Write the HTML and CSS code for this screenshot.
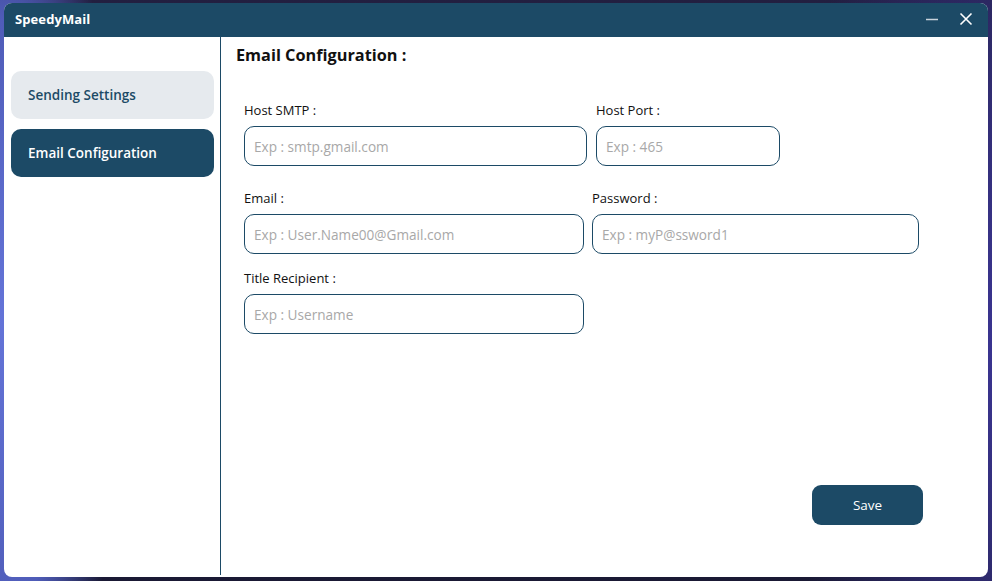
FILE: index.html
```html
<!DOCTYPE html>
<html lang="en">
<head>
<meta charset="utf-8">
<title>SpeedyMail</title>
<link rel="stylesheet" href="styles.css">
</head>
<body>
<div class="window">
  <header class="titlebar">
    <span class="app-name">SpeedyMail</span>
    <div class="controls">
      <button class="ctrl" aria-label="Minimize">
        <svg width="14" height="14" viewBox="0 0 14 14"><path d="M1 7.5h12" stroke="#c9d3dc" stroke-width="1.6"/></svg>
      </button>
      <button class="ctrl" aria-label="Close">
        <svg width="14" height="14" viewBox="0 0 14 14"><path d="M1.5 1.5l11 11M12.5 1.5l-11 11" stroke="#ffffff" stroke-width="1.6"/></svg>
      </button>
    </div>
  </header>
  <div class="body">
    <nav class="sidebar">
      <a class="nav-item">Sending Settings</a>
      <a class="nav-item active">Email Configuration</a>
    </nav>
    <main class="content">
      <h1 class="heading">Email Configuration :</h1>
      <div class="row row-first">
        <label class="field f-smtp"><span class="label">Host SMTP :</span><input class="input" placeholder="Exp : smtp.gmail.com"></label>
        <label class="field f-port"><span class="label">Host Port :</span><input class="input" placeholder="Exp : 465"></label>
      </div>
      <div class="row row-second">
        <label class="field f-email"><span class="label">Email :</span><input class="input" placeholder="Exp : User.Name00@Gmail.com"></label>
        <label class="field f-pass"><span class="label">Password :</span><input class="input" placeholder="Exp : myP@ssword1"></label>
      </div>
      <div class="row">
        <label class="field f-email"><span class="label">Title Recipient :</span><input class="input" placeholder="Exp : Username"></label>
      </div>
      <div class="actions">
        <button class="save">Save</button>
      </div>
    </main>
  </div>
</div>
</body>
</html>
```
FILE: styles.css
```css
* { box-sizing: border-box; }
html, body { margin: 0; height: 100%; }
body {
  width: 992px;
  height: 581px;
  overflow: hidden;
  padding: 3px 4px 4px 4px;
  font-family: "Open Sans", "Noto Sans", sans-serif;
  background:
    radial-gradient(ellipse 120px 500px at 0% 55%, #6474d8 0%, #4f5cb8 60%, rgba(40,40,100,0) 100%),
    radial-gradient(ellipse 200px 600px at 100% 60%, #3a3490 0%, rgba(40,36,110,0) 100%),
    linear-gradient(180deg, #221f40 0%, #2b2a5c 50%, #1a1934 100%);
}
.window {
  width: 984px;
  height: 574px;
  background: #ffffff;
  border-radius: 8px;
  overflow: hidden;
  display: flex;
  flex-direction: column;
}
.titlebar {
  height: 34px;
  flex: none;
  background: #1c4a66;
  display: flex;
  align-items: center;
  justify-content: space-between;
  padding: 0 15px 3px 11px;
}
.app-name {
  color: #ffffff;
  font-weight: 700;
  font-size: 13px;
  letter-spacing: 0.1px;
}
.controls { display: flex; gap: 20px; align-items: center; }
.ctrl {
  background: none;
  border: 0;
  padding: 0;
  width: 14px;
  height: 14px;
  display: block;
}
.ctrl svg { display: block; }
.body { flex: 1; display: flex; min-height: 0; }
.sidebar {
  width: 217px;
  flex: none;
  border-right: 1px solid #1c4a66;
  padding: 34px 6px 0 7px;
  display: flex;
  flex-direction: column;
  gap: 10px;
  margin-bottom: 2px;
}
.nav-item {
  height: 48px;
  border-radius: 10px;
  background: #e6eaee;
  color: #1c4a66;
  font-size: 13.5px;
  font-weight: 600;
  display: flex;
  align-items: center;
  padding-left: 17px;
}
.nav-item.active { background: #1c4a66; color: #ffffff; }
.content {
  flex: 1;
  padding: 5px 0 0 15px;
  display: flex;
  flex-direction: column;
}
.heading {
  margin: 0;
  font-size: 16.3px;
  font-weight: 700;
  color: #111111;
  line-height: 26px;
}
.row { display: flex; gap: 8px; padding-left: 8px; margin-top: 14px; }
.row-first { margin-top: 32px; gap: 9px; }
.row-second { margin-top: 22px; }
.field { display: flex; flex-direction: column; }
.label {
  font-size: 13px;
  color: #111111;
  line-height: 20px;
  margin-bottom: 6px;
}
.input {
  height: 40px;
  border: 1px solid #1c4a66;
  border-radius: 10px;
  padding: 0 9px;
  font-family: inherit;
  font-size: 13.6px;
  color: #333;
  outline: none;
}
.input::placeholder { color: #a8a8a8; }
.f-smtp { width: 343px; }
.f-port { width: 184px; }
.f-email { width: 340px; }
.f-pass { width: 327px; }
.actions {
  margin-top: auto;
  margin-bottom: 52px;
  display: flex;
  justify-content: flex-end;
  padding-right: 65px;
}
.save {
  width: 111px;
  height: 40px;
  border: 0;
  border-radius: 9px;
  background: #1c4a66;
  color: #ffffff;
  font-family: inherit;
  font-size: 13.5px;
}
```
